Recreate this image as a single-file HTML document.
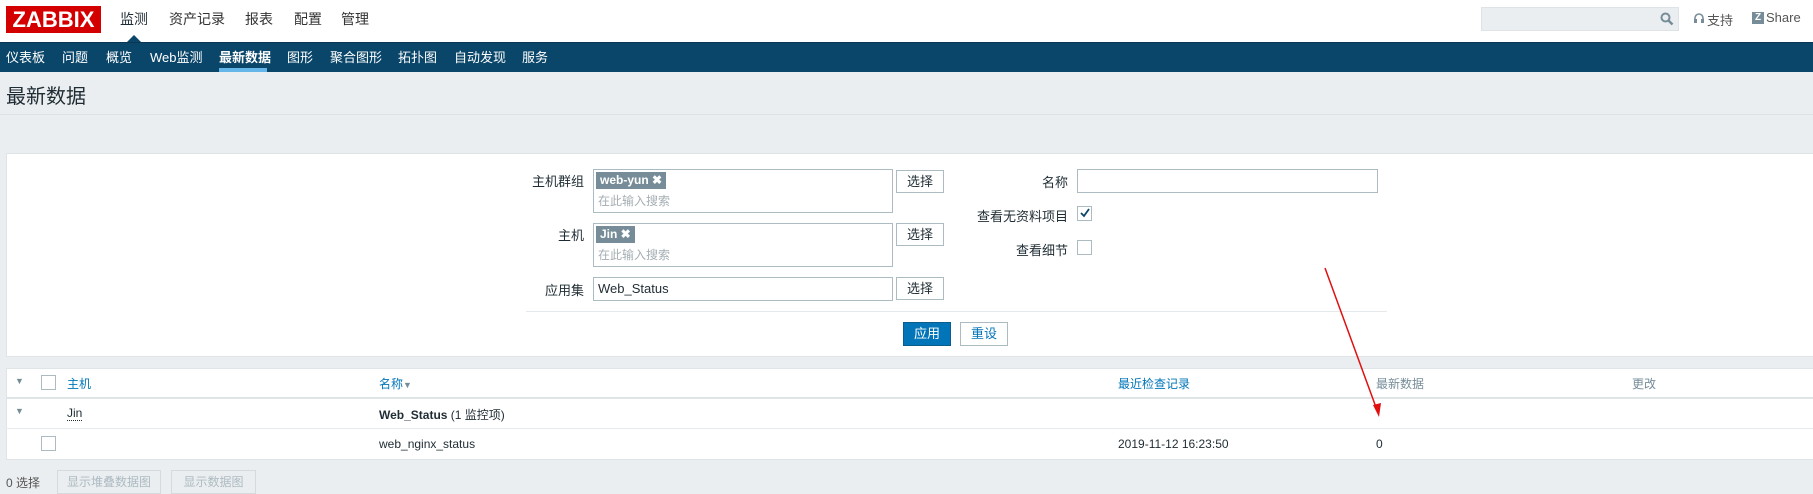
<!DOCTYPE html>
<html><head><meta charset="utf-8"><style>
*{box-sizing:border-box;margin:0;padding:0}
body{width:1813px;height:485px;overflow:hidden;background:#ebeef0;font-family:"Liberation Sans","Noto Sans CJK SC",sans-serif;font-size:13px;color:#1f2c33;position:relative}
.a{position:absolute;white-space:nowrap}
.top{position:absolute;left:0;top:0;width:1813px;height:42px;background:#fff}
.nav{position:absolute;left:0;top:42px;width:1813px;height:30px;background:#0a466a;border-top:1px solid #0b3550}
.nav span{position:absolute;top:4px;color:#fff;font-size:13px}
.box{position:absolute;background:#fff;border:1px solid #dfe4e7}
.in{position:absolute;background:#fff;border:1px solid #acbbc2}
.btn{position:absolute;background:#fff;border:1px solid #acbbc2;height:23px;width:48px;text-align:center;line-height:21px;font-size:13px}
.tag{position:absolute;background:#768d99;color:#fff;font-weight:bold;font-size:12px;height:17px;line-height:17px;padding:0 4px}
.ph{position:absolute;color:#a5aeb3;font-size:12px}
.lbl{position:absolute;text-align:right;font-size:13px}
.cb{position:absolute;width:15px;height:15px;border:1px solid #acbbc2;background:#fff}
.th{position:absolute;top:375px;color:#0275b8;font-size:12px}
</style></head><body>
<div class="top"></div>
<div class="a" style="left:6px;top:6px;width:95px;height:27px;background:#d40000;color:#fff;font-size:22px;font-weight:bold;line-height:27px;text-align:center">ZABBIX</div>
<div class="a" style="left:120px;top:9px;font-size:14px">监测</div>
<div class="a" style="left:169px;top:9px;font-size:14px;color:#333">资产记录</div>
<div class="a" style="left:245px;top:9px;font-size:14px;color:#333">报表</div>
<div class="a" style="left:294px;top:9px;font-size:14px;color:#333">配置</div>
<div class="a" style="left:341px;top:9px;font-size:14px;color:#333">管理</div>
<div class="a" style="left:127px;top:35px;width:0;height:0;border-left:7px solid transparent;border-right:7px solid transparent;border-bottom:7px solid #0a466a"></div>
<div class="a" style="left:1481px;top:7px;width:198px;height:24px;background:#ebeef0;border:1px solid #e0e3e5"></div>
<svg class="a" style="left:1660px;top:12px" width="14" height="14"><circle cx="5.5" cy="5.5" r="4" fill="none" stroke="#768d99" stroke-width="2"/><line x1="8.5" y1="8.5" x2="12.5" y2="12.5" stroke="#768d99" stroke-width="2.5"/></svg>
<svg class="a" style="left:1693px;top:12px" width="12" height="13"><path d="M2 8 V6 A4 4 0 0 1 10 6 V8" fill="none" stroke="#768d99" stroke-width="1.6"/><rect x="1" y="7" width="3" height="4" fill="#768d99"/><rect x="8" y="7" width="3" height="4" fill="#768d99"/></svg>
<div class="a" style="left:1707px;top:10px;font-size:13px;color:#555">支持</div>
<div class="a" style="left:1752px;top:12px;width:12px;height:12px;background:#768d99;color:#fff;font-size:10px;font-weight:bold;line-height:12px;text-align:center">Z</div>
<div class="a" style="left:1766px;top:10px;font-size:13px;color:#555">Share</div>
<div class="nav">
<span style="left:6px">仪表板</span><span style="left:62px">问题</span><span style="left:106px">概览</span><span style="left:150px">Web监测</span><span style="left:219px;font-weight:bold">最新数据</span><span style="left:287px">图形</span><span style="left:330px">聚合图形</span><span style="left:398px">拓扑图</span><span style="left:454px">自动发现</span><span style="left:522px">服务</span>
<div class="a" style="left:219px;top:25px;width:48px;height:4px;background:#64b5e8"></div>
</div>
<div class="a" style="left:6px;top:80px;font-size:20px;color:#1f2c33">最新数据</div>
<div class="a" style="left:0;top:114px;width:1813px;height:1px;background:#dde1e3"></div>
<div class="box" style="left:6px;top:153px;width:1810px;height:204px"></div>
<div class="lbl" style="left:480px;width:104px;top:171px">主机群组</div>
<div class="in" style="left:593px;top:169px;width:300px;height:44px"></div>
<div class="tag" style="left:596px;top:172px">web-yun ✖</div>
<div class="ph" style="left:598px;top:192px">在此输入搜索</div>
<div class="btn" style="left:896px;top:170px">选择</div>
<div class="lbl" style="left:480px;width:104px;top:225px">主机</div>
<div class="in" style="left:593px;top:223px;width:300px;height:44px"></div>
<div class="tag" style="left:596px;top:226px">Jin ✖</div>
<div class="ph" style="left:598px;top:246px">在此输入搜索</div>
<div class="btn" style="left:896px;top:223px">选择</div>
<div class="lbl" style="left:480px;width:104px;top:280px">应用集</div>
<div class="in" style="left:593px;top:277px;width:300px;height:24px"></div>
<div class="a" style="left:598px;top:281px">Web_Status</div>
<div class="btn" style="left:896px;top:277px">选择</div>
<div class="lbl" style="left:940px;width:128px;top:172px">名称</div>
<div class="in" style="left:1077px;top:169px;width:301px;height:24px"></div>
<div class="lbl" style="left:940px;width:128px;top:206px">查看无资料项目</div>
<div class="cb" style="left:1077px;top:206px"></div>
<svg class="a" style="left:1079px;top:207px" width="12" height="12"><path d="M2 6 L5 9 L10 2" fill="none" stroke="#0a466a" stroke-width="1.8"/></svg>
<div class="lbl" style="left:940px;width:128px;top:240px">查看细节</div>
<div class="cb" style="left:1077px;top:240px"></div>
<div class="a" style="left:526px;top:311px;width:861px;height:1px;background:#e5e9eb"></div>
<div class="a" style="left:903px;top:322px;width:48px;height:24px;background:#0275b8;border:1px solid #0d5d8c;color:#fff;text-align:center;line-height:22px">应用</div>
<div class="btn" style="left:960px;top:322px;color:#0275b8;height:24px">重设</div>
<div class="box" style="left:6px;top:368px;width:1810px;height:92px"></div>
<div class="a" style="left:6px;top:397px;width:1810px;height:2px;background:#dfe4e7"></div>
<div class="a" style="left:6px;top:428px;width:1810px;height:1px;background:#e8ebed"></div>
<div class="a" style="left:15px;top:376px;font-size:9px;color:#768d99">▼</div>
<div class="cb" style="left:41px;top:375px"></div>
<div class="th" style="left:67px">主机</div>
<div class="th" style="left:379px">名称<span style="color:#768d99;font-size:9px">▼</span></div>
<div class="th" style="left:1118px">最近检查记录</div>
<div class="th" style="left:1376px;color:#768d99">最新数据</div>
<div class="th" style="left:1632px;color:#768d99">更改</div>
<div class="a" style="left:15px;top:406px;font-size:9px;color:#768d99">▼</div>
<div class="a" style="left:67px;top:406px;font-size:12px;border-bottom:1px dotted #1f2c33;line-height:14px">Jin</div>
<div class="a" style="left:379px;top:406px;font-size:12px"><b>Web_Status</b> (1 监控项)</div>
<div class="cb" style="left:41px;top:436px"></div>
<div class="a" style="left:379px;top:437px;font-size:12px">web_nginx_status</div>
<div class="a" style="left:1118px;top:437px;font-size:12px">2019-11-12 16:23:50</div>
<div class="a" style="left:1376px;top:437px;font-size:12px">0</div>
<div class="a" style="left:6px;top:474px;font-size:12px;color:#555">0 选择</div>
<div class="a" style="left:57px;top:470px;width:104px;height:24px;border:1px solid #d5dadd;color:#acbbc2;font-size:12px;text-align:center;line-height:22px">显示堆叠数据图</div>
<div class="a" style="left:171px;top:470px;width:85px;height:24px;border:1px solid #d5dadd;color:#acbbc2;font-size:12px;text-align:center;line-height:22px">显示数据图</div>
<svg class="a" style="left:0;top:0" width="1813" height="485"><line x1="1325" y1="268" x2="1377" y2="410" stroke="#e01010" stroke-width="1.5"/><polygon points="1379,417 1373,405 1381,403" fill="#e01010"/></svg>
</body></html>
